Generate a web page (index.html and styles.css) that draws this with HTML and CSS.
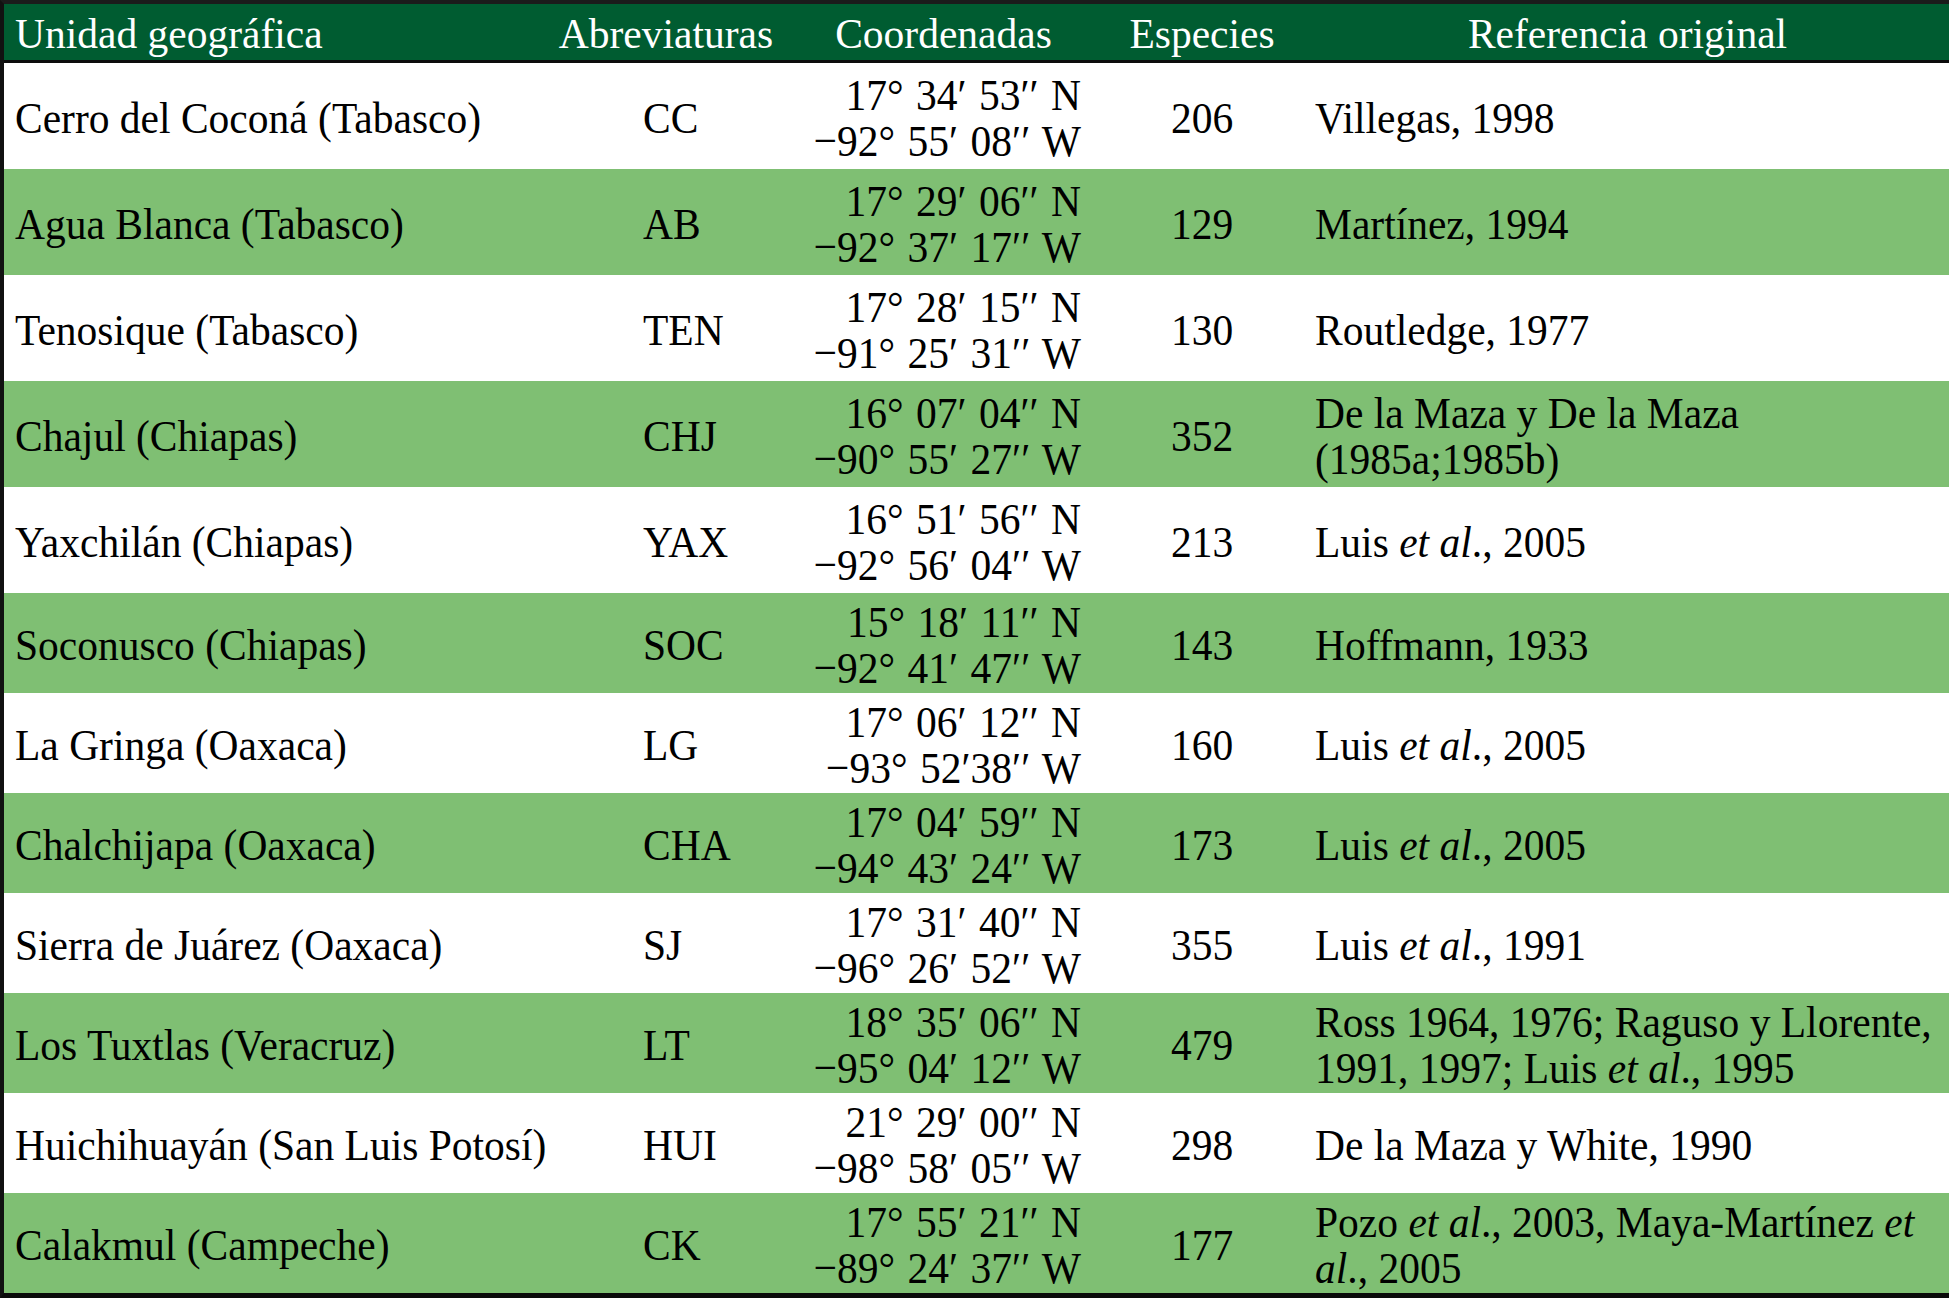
FILE: index.html
```html
<!DOCTYPE html>
<html lang="es">
<head>
<meta charset="utf-8">
<title>Unidades geográficas</title>
<link rel="stylesheet" href="styles.css">
</head>
<body>
<table class="tbl">
  <colgroup>
    <col class="c1"><col class="c2"><col class="c3"><col class="c4"><col class="c5">
  </colgroup>
  <thead>
    <tr class="head">
      <th class="h-left"><span class="t">Unidad geográfica</span></th>
      <th><span class="t">Abreviaturas</span></th>
      <th><span class="t">Coordenadas</span></th>
      <th><span class="t">Especies</span></th>
      <th><span class="t">Referencia original</span></th>
    </tr>
  </thead>
  <tbody>
    <tr class="w tall">
      <td class="name"><span class="t">Cerro del Coconá (Tabasco)</span></td>
      <td class="abbr"><span class="t">CC</span></td>
      <td class="coord"><span class="t">17° 34′ 53′′ N<br>−92° 55′ 08′′ W</span></td>
      <td class="spp"><span class="t">206</span></td>
      <td class="ref"><span class="t">Villegas, 1998</span></td>
    </tr>
    <tr class="g tall">
      <td class="name"><span class="t">Agua Blanca (Tabasco)</span></td>
      <td class="abbr"><span class="t">AB</span></td>
      <td class="coord"><span class="t">17° 29′ 06′′ N<br>−92° 37′ 17′′ W</span></td>
      <td class="spp"><span class="t">129</span></td>
      <td class="ref"><span class="t">Martínez, 1994</span></td>
    </tr>
    <tr class="w tall">
      <td class="name"><span class="t">Tenosique (Tabasco)</span></td>
      <td class="abbr"><span class="t">TEN</span></td>
      <td class="coord"><span class="t">17° 28′ 15′′ N<br>−91° 25′ 31′′ W</span></td>
      <td class="spp"><span class="t">130</span></td>
      <td class="ref"><span class="t">Routledge, 1977</span></td>
    </tr>
    <tr class="g tall">
      <td class="name"><span class="t">Chajul (Chiapas)</span></td>
      <td class="abbr"><span class="t">CHJ</span></td>
      <td class="coord"><span class="t">16° 07′ 04′′ N<br>−90° 55′ 27′′ W</span></td>
      <td class="spp"><span class="t">352</span></td>
      <td class="ref"><span class="t">De la Maza y De la Maza<br>(1985a;1985b)</span></td>
    </tr>
    <tr class="w tall">
      <td class="name"><span class="t">Yaxchilán (Chiapas)</span></td>
      <td class="abbr"><span class="t">YAX</span></td>
      <td class="coord"><span class="t">16° 51′ 56′′ N<br>−92° 56′ 04′′ W</span></td>
      <td class="spp"><span class="t">213</span></td>
      <td class="ref"><span class="t">Luis <i>et al</i>., 2005</span></td>
    </tr>
    <tr class="g">
      <td class="name"><span class="t">Soconusco (Chiapas)</span></td>
      <td class="abbr"><span class="t">SOC</span></td>
      <td class="coord"><span class="t">15° 18′ 11′′ N<br>−92° 41′ 47′′ W</span></td>
      <td class="spp"><span class="t">143</span></td>
      <td class="ref"><span class="t">Hoffmann, 1933</span></td>
    </tr>
    <tr class="w">
      <td class="name"><span class="t">La Gringa (Oaxaca)</span></td>
      <td class="abbr"><span class="t">LG</span></td>
      <td class="coord"><span class="t">17° 06′ 12′′ N<br>−93° 52′38′′ W</span></td>
      <td class="spp"><span class="t">160</span></td>
      <td class="ref"><span class="t">Luis <i>et al</i>., 2005</span></td>
    </tr>
    <tr class="g">
      <td class="name"><span class="t">Chalchijapa (Oaxaca)</span></td>
      <td class="abbr"><span class="t">CHA</span></td>
      <td class="coord"><span class="t">17° 04′ 59′′ N<br>−94° 43′ 24′′ W</span></td>
      <td class="spp"><span class="t">173</span></td>
      <td class="ref"><span class="t">Luis <i>et al</i>., 2005</span></td>
    </tr>
    <tr class="w">
      <td class="name"><span class="t">Sierra de Juárez (Oaxaca)</span></td>
      <td class="abbr"><span class="t">SJ</span></td>
      <td class="coord"><span class="t">17° 31′ 40′′ N<br>−96° 26′ 52′′ W</span></td>
      <td class="spp"><span class="t">355</span></td>
      <td class="ref"><span class="t">Luis <i>et al</i>., 1991</span></td>
    </tr>
    <tr class="g">
      <td class="name"><span class="t">Los Tuxtlas (Veracruz)</span></td>
      <td class="abbr"><span class="t">LT</span></td>
      <td class="coord"><span class="t">18° 35′ 06′′ N<br>−95° 04′ 12′′ W</span></td>
      <td class="spp"><span class="t">479</span></td>
      <td class="ref"><span class="t">Ross 1964, 1976; Raguso y Llorente,<br>1991, 1997; Luis <i>et al</i>., 1995</span></td>
    </tr>
    <tr class="w">
      <td class="name"><span class="t">Huichihuayán (San Luis Potosí)</span></td>
      <td class="abbr"><span class="t">HUI</span></td>
      <td class="coord"><span class="t">21° 29′ 00′′ N<br>−98° 58′ 05′′ W</span></td>
      <td class="spp"><span class="t">298</span></td>
      <td class="ref"><span class="t">De la Maza y White, 1990</span></td>
    </tr>
    <tr class="g last">
      <td class="name"><span class="t">Calakmul (Campeche)</span></td>
      <td class="abbr"><span class="t">CK</span></td>
      <td class="coord"><span class="t">17° 55′ 21′′ N<br>−89° 24′ 37′′ W</span></td>
      <td class="spp"><span class="t">177</span></td>
      <td class="ref"><span class="t">Pozo <i>et al</i>., 2003, Maya-Martínez <i>et</i><br><i>al</i>., 2005</span></td>
    </tr>
  </tbody>
</table>
</body>
</html>
```

FILE: styles.css
```css
html, body {
  margin: 0;
  padding: 0;
  background: #ffffff;
}

body {
  width: 1949px;
  height: 1298px;
  overflow: hidden;
  font-family: "Liberation Serif", "Times New Roman", serif;
  color: #000000;
}

.tbl {
  width: 1949px;
  border-collapse: separate;
  border-spacing: 0;
  table-layout: fixed;
  border-top: 4px solid #1b1b1b;
  border-left: 4px solid #111111;
  border-bottom: 5px solid #0a0a0a;
  font-size: 41.5px;
}

.c1 { width: 543px; }
.c2 { width: 238px; }
.c3 { width: 317px; }
.c4 { width: 200px; }
.c5 { width: 651px; }

.tbl th,
.tbl td {
  padding: 0;
  vertical-align: middle;
  white-space: nowrap;
  line-height: 42px;
}

.t {
  display: inline-block;
  transform: scaleY(1.09);
}

.head {
  height: 59px;
  background: #005c31;
}

.tbl .head th {
  color: #ffffff;
  font-weight: normal;
  text-align: center;
  padding-top: 2px;
  border-bottom: 3px solid #0c0c0c;
}

.head .t {
  transform: scaleY(1.04);
}

.tbl .head th.h-left {
  text-align: left;
  padding-left: 11px;
}

.tbl tbody tr {
  height: 100px;
}

.tbl tbody tr.tall {
  height: 106px;
}

.tbl tbody td {
  padding-top: 3px;
}

.w { background: #ffffff; }
.g { background: #7fbf73; }

.tbl td.name {
  padding-left: 11px;
  text-align: left;
}

.tbl td.abbr {
  padding-left: 96px;
  text-align: left;
}

.tbl td.coord {
  text-align: right;
  padding-right: 21px;
  word-spacing: 2px;
}

.tbl td.spp {
  text-align: center;
}

.tbl td.ref {
  text-align: left;
  padding-left: 13px;
}

.ref i {
  font-style: italic;
}
```
